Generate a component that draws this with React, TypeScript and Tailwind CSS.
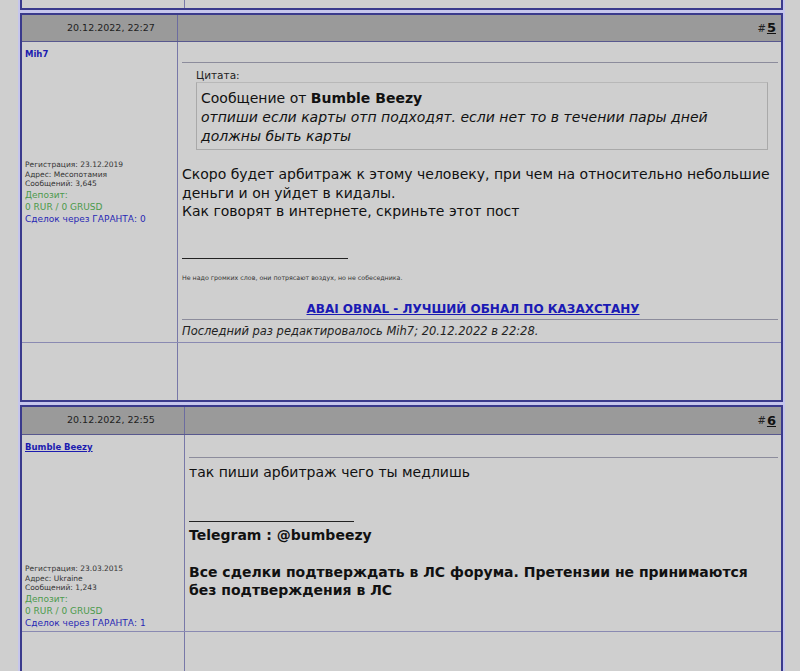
const font = { fontFamily: '"DejaVu Sans", Verdana, sans-serif' };

function UserInfo({ name, underline, reg, addr, msgs, deals, gap }: { name: string; underline?: boolean; reg: string; addr: string; msgs: string; deals: string; gap: string }) {
  return (
    <div className="flex flex-col px-[3px] pt-[6px]">
      <a className={`text-[8.5px] font-bold text-[#1c1cb0] leading-[12px] ${underline ? 'underline' : ''}`}>{name}</a>
      <div className={gap} />
      <div className="text-[7.5px] leading-[9.5px] text-[#333]">Регистрация: {reg}</div>
      <div className="text-[7.5px] leading-[9.5px] text-[#333]">Адрес: {addr}</div>
      <div className="text-[7.5px] leading-[9.5px] text-[#333]">Сообщений: {msgs}</div>
      <div className="text-[9px] leading-[12px] text-[#4c9a4c]">Депозит:</div>
      <div className="text-[9px] leading-[12px] text-[#4c9a4c]">0 RUR / 0 GRUSD</div>
      <div className="text-[9px] leading-[12px] text-[#2828b4]">Сделок через ГАРАНТА: {deals}</div>
    </div>
  );
}

function Header({ date, num, left, h }: { date: string; num: string; left: string; h: string }) {
  return (
    <div className={`grid ${left} ${h} bg-[#9a9a9a] border-b border-[#58588e]`}>
      <div className="flex items-center pl-[45px] border-r border-[#6c6ca0] text-[9.5px] text-[#1e1e1e]">{date}</div>
      <div className="flex items-center justify-end pr-[5px] text-[#222]">
        <span className="text-[10px] mr-[1px]">#</span>
        <a className="text-[13px] font-bold underline text-[#111]">{num}</a>
      </div>
    </div>
  );
}

export default function App() {
  return (
    <div className="min-h-screen bg-[#cfcfcf] overflow-hidden" style={font}>
      <div className="ml-[18px] w-[767px] bg-[#c6c6ec] flex flex-col gap-[3px] pb-[2px] px-[2px]">
        <div className="grid grid-cols-[163px_1fr] h-[10px] border-x-2 border-b-2 border-[#3a3a8c] bg-[#cfcfcf]">
          <div className="border-r border-[#7878a8]" />
          <div />
        </div>

        <div className="border-2 border-[#3a3a8c] bg-[#cfcfcf]">
          <Header date="20.12.2022, 22:27" num="5" left="grid-cols-[156px_1fr]" h="h-[27px]" />
          <div className="grid grid-cols-[156px_1fr] h-[301px] border-b border-[#8a8ab2]">
            <div className="border-r border-[#7878a8]">
              <UserInfo name="Mih7" gap="h-[100px]" reg="23.12.2019" addr="Месопотамия" msgs="3,645" deals="0" />
            </div>
            <div className="pl-[4px] pr-[3px] pt-[20px] text-[#111]">
              <div className="h-px bg-[#8c8c9c]" />
              <div className="pl-[14px] pr-[10px] pt-[5px]">
                <div className="text-[10.5px] leading-[14px] text-[#222]">Цитата:</div>
                <div className="border border-[#a9a9a9] border-t-[#b8b8b8] px-[4px] pt-[6px] pb-[3px] text-[14px] leading-[19px]">
                  <div>Сообщение от <b>Bumble Beezy</b></div>
                  <div className="italic">отпиши если карты отп подходят. если нет то в течении пары дней<br />должны быть карты</div>
                </div>
              </div>
              <div className="mt-[15px] text-[14px] leading-[18.5px] whitespace-nowrap">
                Скоро будет арбитраж к этому человеку, при чем на относительно небольшие<br />
                деньги и он уйдет в кидалы.<br />
                Как говорят в интернете, скриньте этот пост
              </div>
              <div className="mt-[37px] w-[166px] h-px bg-[#222]" />
              <div className="mt-[14px] text-[6.3px] leading-[10px] text-[#333]">Не надо громких слов, они потрясают воздух, но не собеседника.</div>
              <div className="mt-[18px] text-center pr-[14px] text-[12px] leading-[16px]">
                <a className="font-bold underline text-[#1a1ab4]">ABAI OBNAL - ЛУЧШИЙ ОБНАЛ ПО КАЗАХСТАНУ</a>
              </div>
              <div className="h-px bg-[#8c8c9c] mt-[2px]" />
              <div className="mt-[2px] italic text-[11.5px] leading-[18px] text-[#222]">Последний раз редактировалось Mih7; 20.12.2022 в 22:28.</div>
            </div>
          </div>
          <div className="grid grid-cols-[156px_1fr] h-[57px]">
            <div className="border-r border-[#7878a8]" />
            <div />
          </div>
        </div>

        <div className="border-2 border-[#3a3a8c] bg-[#cfcfcf]">
          <Header date="20.12.2022, 22:55" num="6" left="grid-cols-[163px_1fr]" h="h-[28px]" />
          <div className="grid grid-cols-[163px_1fr] h-[197px] border-b border-[#8a8ab2]">
            <div className="border-r border-[#7878a8]">
              <UserInfo name="Bumble Beezy" underline gap="h-[111px]" reg="23.03.2015" addr="Ukraine" msgs="1,243" deals="1" />
            </div>
            <div className="pl-[4px] pr-[3px] pt-[22px] text-[#111]">
              <div className="h-px bg-[#8c8c9c]" />
              <div className="mt-[5px] text-[14px] leading-[19px]">так пиши арбитраж чего ты медлишь</div>
              <div className="mt-[39px] w-[165px] h-px bg-[#222]" />
              <div className="mt-[4px] text-[14px] leading-[19px] font-bold">Telegram : @bumbeezy</div>
              <div className="mt-[18px] text-[14px] leading-[18px] font-bold whitespace-nowrap">
                Все сделки подтверждать в ЛС форума. Претензии не принимаются<br />
                без подтверждения в ЛС
              </div>
            </div>
          </div>
          <div className="grid grid-cols-[163px_1fr] h-[57px]">
            <div className="border-r border-[#7878a8]" />
            <div />
          </div>
        </div>
      </div>
    </div>
  );
}
